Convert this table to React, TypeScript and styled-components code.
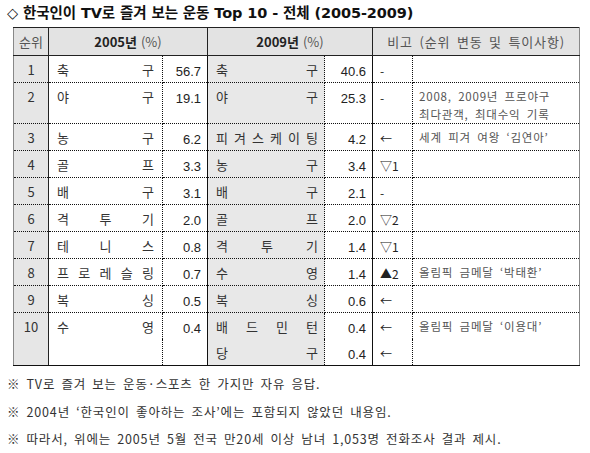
import React from "react";
import styled, { createGlobalStyle } from "styled-components";

const GlobalStyle = createGlobalStyle`
  html, body {
    margin: 0;
    padding: 0;
    background: #ffffff;
  }
  body {
    font-family: "Noto Sans CJK KR", "Liberation Sans", sans-serif;
    color: #222;
  }
`;

type Row = {
  rank: string;
  y05: string;
  p05: string;
  y09: string;
  p09: string;
  change: string;
  note?: string[];
  tall?: boolean;
};

const rows: Row[] = [
  { rank: "1", y05: "축구", p05: "56.7", y09: "축구", p09: "40.6", change: "-" },
  {
    rank: "2", y05: "야구", p05: "19.1", y09: "야구", p09: "25.3", change: "-",
    note: ["2008, 2009년 프로야구", "최다관객, 최대수익 기록"], tall: true,
  },
  { rank: "3", y05: "농구", p05: "6.2", y09: "피겨스케이팅", p09: "4.2", change: "←", note: ["세계 피겨 여왕 ‘김연아’"] },
  { rank: "4", y05: "골프", p05: "3.3", y09: "농구", p09: "3.4", change: "▽1" },
  { rank: "5", y05: "배구", p05: "3.1", y09: "배구", p09: "2.1", change: "-" },
  { rank: "6", y05: "격투기", p05: "2.0", y09: "골프", p09: "2.0", change: "▽2" },
  { rank: "7", y05: "테니스", p05: "0.8", y09: "격투기", p09: "1.4", change: "▽1" },
  { rank: "8", y05: "프로레슬링", p05: "0.7", y09: "수영", p09: "1.4", change: "▲2", note: ["올림픽 금메달 ‘박태환’"] },
  { rank: "9", y05: "복싱", p05: "0.5", y09: "복싱", p09: "0.6", change: "←" },
];

const notes = [
  "※ TV로 즐겨 보는 운동·스포츠 한 가지만 자유 응답.",
  "※ 2004년 ‘한국인이 좋아하는 조사’에는 포함되지 않았던 내용임.",
  "※ 따라서, 위에는 2005년 5월 전국 만20세 이상 남녀 1,053명 전화조사 결과 제시.",
];

function Spread({ text }: { text: string }) {
  return (
    <SpreadBox>
      {text.split("").map((c, i) => (
        <span key={i}>{c}</span>
      ))}
    </SpreadBox>
  );
}

export default function App() {
  return (
    <>
      <GlobalStyle />
      <Page>
        <Title>◇ 한국인이 TV로 즐겨 보는 운동 Top 10 - 전체 (2005-2009)</Title>
        <Table>
          <colgroup>
            <col style={{ width: 35 }} />
            <col style={{ width: 114 }} />
            <col style={{ width: 45 }} />
            <col style={{ width: 117 }} />
            <col style={{ width: 48 }} />
            <col style={{ width: 40 }} />
            <col style={{ width: 167 }} />
          </colgroup>
          <thead>
            <tr>
              <HeadCell>순위</HeadCell>
              <HeadCell colSpan={2}>
                <b>2005년</b> (%)
              </HeadCell>
              <HeadCell colSpan={2}>
                <b>2009년</b> (%)
              </HeadCell>
              <HeadCell colSpan={2} $wide>
                비고 (순위 변동 및 특이사항)
              </HeadCell>
            </tr>
          </thead>
          <tbody>
            {rows.map((r) => (
              <BodyRow key={r.rank} $h={r.tall ? 37 : 27}>
                <RankCell>{r.rank}</RankCell>
                <NameCell>
                  <Spread text={r.y05} />
                </NameCell>
                <PctCell $section>{r.p05}</PctCell>
                <NameCell $gray $right={6}>
                  <Spread text={r.y09} />
                </NameCell>
                <PctCell $section>{r.p09}</PctCell>
                <ChangeCell>{r.change}</ChangeCell>
                <NoteCell>
                  {r.note?.map((n) => (
                    <div key={n}>{n}</div>
                  ))}
                </NoteCell>
              </BodyRow>
            ))}
            <BodyRow $h={26}>
              <RankCell rowSpan={2} $last>10</RankCell>
              <NameCell rowSpan={2} $last>
                <Spread text="수영" />
              </NameCell>
              <PctCell rowSpan={2} $section $last>0.4</PctCell>
              <NameCell $gray $right={6} $open>
                <Spread text="배드민턴" />
              </NameCell>
              <PctCell $section $open>0.4</PctCell>
              <ChangeCell $open>←</ChangeCell>
              <NoteCell rowSpan={2} $last>
                <div>올림픽 금메달 ‘이용대’</div>
              </NoteCell>
            </BodyRow>
            <BodyRow $h={27}>
              <NameCell $gray $right={6} $last>
                <Spread text="당구" />
              </NameCell>
              <PctCell $section $last>0.4</PctCell>
              <ChangeCell $last>←</ChangeCell>
            </BodyRow>
          </tbody>
        </Table>
        <Notes>
          {notes.map((n) => (
            <Note key={n}>{n}</Note>
          ))}
        </Notes>
      </Page>
    </>
  );
}

const Page = styled.div`
  width: 590px;
  padding: 4px 0 0 0;
`;

const Title = styled.div`
  padding-left: 7px;
  height: 23px;
  font-family: "DejaVu Sans", "Noto Sans CJK KR", sans-serif;
  font-weight: bold;
  font-size: 14.5px;
  line-height: 18px;
  color: #111;
  letter-spacing: -0.1px;
`;

const Table = styled.table`
  margin-left: 13px;
  border-collapse: collapse;
  table-layout: fixed;
  width: 566px;
  font-size: 13px;
  border-top: 1px solid #222;
  border-left: 1px solid #888;
  border-right: 1px solid #888;
`;

const HeadCell = styled.th<{ $wide?: boolean }>`
  height: 27px;
  padding: 0;
  background: #e3e3e3;
  font-weight: normal;
  font-size: 13px;
  color: #555;
  text-align: center;
  letter-spacing: ${(p) => (p.$wide ? "0.8px" : "0")};
  word-spacing: ${(p) => (p.$wide ? "3px" : "1px")};
  border-bottom: 1px solid #222;
  border-left: 1px solid #222;
  &:first-child {
    border-left: none;
  }
  b {
    color: #222;
    font-weight: bold;
  }
`;

const BodyRow = styled.tr<{ $h: number }>`
  height: ${(p) => p.$h}px;
`;

const Cell = styled.td<{ $last?: boolean; $open?: boolean }>`
  padding: 0;
  vertical-align: top;
  line-height: 16px;
  padding-top: 6px;
  border-bottom: ${(p) =>
    p.$open ? "none" : p.$last ? "1px solid #111" : "1px dotted #111"};
`;

const RankCell = styled(Cell)`
  background: #e6e6e6;
  text-align: center;
  color: #333;
  border-right: 1px solid #222;
`;

const NameCell = styled(Cell)<{ $gray?: boolean; $right?: number }>`
  background: ${(p) => (p.$gray ? "#e8e8e8" : "#fff")};
  padding-left: 8px;
  padding-right: ${(p) => p.$right ?? 8}px;
  color: #333;
  border-right: 1px dotted #111;
`;

const SpreadBox = styled.div`
  display: flex;
  justify-content: space-between;
`;

const PctCell = styled(Cell)<{ $section?: boolean }>`
  text-align: right;
  padding-right: 6px;
  padding-top: 8px;
  color: #222;
  font-family: "Liberation Sans", "Noto Sans CJK KR", sans-serif;
  font-size: 13px;
  border-right: ${(p) => (p.$section ? "1px solid #111" : "1px dotted #111")};
`;

const ChangeCell = styled(Cell)`
  padding-left: 7px;
  padding-top: 7px;
  color: #222;
  font-size: 12px;
  border-right: 1px dotted #111;
`;

const NoteCell = styled(Cell)`
  padding-left: 6px;
  padding-top: 4px;
  font-size: 11.5px;
  line-height: 18px;
  letter-spacing: 0.8px;
  word-spacing: 3px;
  color: #555;
  white-space: nowrap;
`;

const Notes = styled.div`
  display: flex;
  flex-direction: column;
  gap: 10px;
  padding: 9px 0 0 7px;
`;

const Note = styled.div`
  font-size: 12.5px;
  line-height: 17.5px;
  letter-spacing: 0.85px;
  word-spacing: 2.5px;
  color: #333;
`;
